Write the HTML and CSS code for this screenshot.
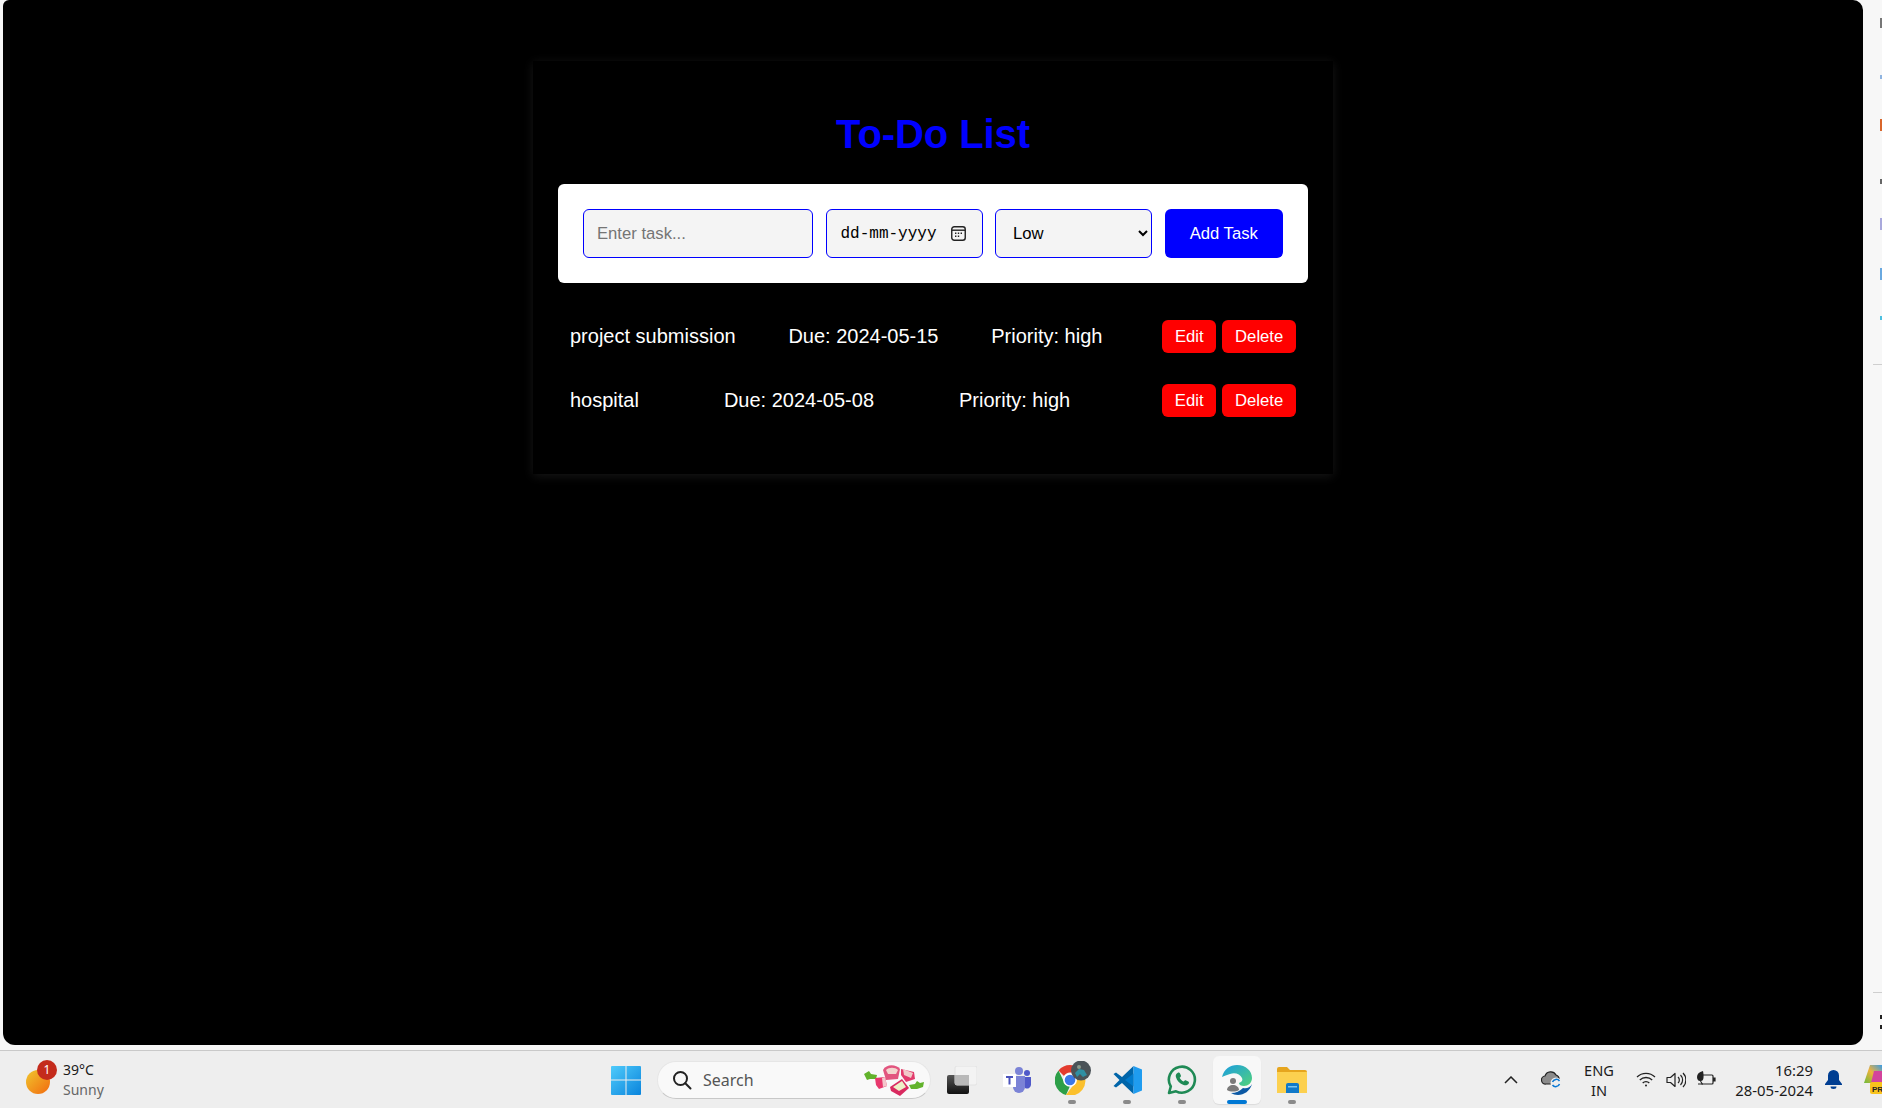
FILE: index.html
```html
<!DOCTYPE html>
<html lang="en">

<head>
  <meta charset="UTF-8" />
  <meta name="viewport" content="width=device-width, initial-scale=1.0" />
  <title>To-Do List</title>
  <link rel="stylesheet" href="styles.css">
</head>

<body>

  <div class="desktop">
    <!-- Browser page -->
    <main class="page">
      <div class="container">
        <h1>To-Do List</h1>
        <form class="task-form">
          <input class="field field-task" type="text" placeholder="Enter task...">
          <div class="field field-date">
            <span>dd-mm-yyyy</span>
            <svg width="15" height="15" viewBox="0 0 15 15" fill="none" stroke="#222">
              <rect x="0.75" y="0.75" width="13.5" height="13.5" rx="2.5" stroke-width="1.4" />
              <path d="M1 4.2h13" stroke-width="1.4" />
              <path d="M4 7.2h1.4M6.8 7.2h1.4M9.6 7.2h1.4M4 10.2h1.4M6.8 10.2h1.4" stroke-width="1.5" />
            </svg>
          </div>
          <select class="field field-priority">
            <option>Low</option>
            <option>Medium</option>
            <option>High</option>
          </select>
          <button class="add-btn" type="button">Add Task</button>
        </form>
        <ul class="task-list">
          <li class="task">
            <span>project submission</span>
            <span>Due: 2024-05-15</span>
            <span>Priority: high</span>
            <div class="task-actions">
              <button class="task-btn" type="button">Edit</button>
              <button class="task-btn" type="button">Delete</button>
            </div>
          </li>
          <li class="task">
            <span>hospital</span>
            <span>Due: 2024-05-08</span>
            <span>Priority: high</span>
            <div class="task-actions">
              <button class="task-btn" type="button">Edit</button>
              <button class="task-btn" type="button">Delete</button>
            </div>
          </li>
        </ul>
      </div>
    </main>

    <!-- Edge sidebar, cut off by the window -->
    <aside class="sidebar">
      <i class="side-dot dot-grey"></i>
      <i class="side-dot dot-blue"></i>
      <i class="side-dot dot-orange"></i>
      <i class="side-dot dot-small"></i>
      <i class="side-dot dot-purple"></i>
      <i class="side-dot dot-sky"></i>
      <i class="side-dot dot-cyan"></i>
      <hr class="side-line">
      <hr class="side-line side-line-low">
      <i class="side-dot dot-dark"></i>
      <i class="side-dot dot-dark dot-dark-2"></i>
    </aside>
  </div>

  <!-- Taskbar -->
  <footer class="taskbar">
    <div class="weather">
      <div class="sun"><span class="sun-badge">1</span></div>
      <div class="weather-text">
        <span>39°C</span>
        <span class="weather-sub">Sunny</span>
      </div>
    </div>

    <svg class="win-logo" width="30" height="30" viewBox="0 0 30 30">
      <defs>
        <linearGradient id="winA" x1="0" y1="0" x2="1" y2="1">
          <stop offset="0" stop-color="#4fcbfb" />
          <stop offset="1" stop-color="#0a84dc" />
        </linearGradient>
      </defs>
      <path fill="url(#winA)" d="M1 1h13.5v13.5H0V2a1 1 0 0 1 1-1zM15.500 1H29a1 1 0 0 1 1 1v12.500H15.500zM0 15.500h14.500V30H1a1 1 0 0 1-1-1zM15.500 15.500H30V29a1 1 0 0 1-1 1H15.500z" />
    </svg>

    <div class="search">
      <svg width="20" height="20" viewBox="0 0 20 20" fill="none" stroke="#222" stroke-width="2">
        <circle cx="8.500" cy="8.500" r="6.500" />
        <path d="M13.300 13.300L18.500 18.500" stroke-linecap="round" />
      </svg>
      <span class="search-label">Search</span>
      <svg class="search-art" width="62" height="32" viewBox="0 0 62 32">
        <path fill="#62b32c" d="M1 10l5-3 2 3 6 1-1 4-6 0-3 1zM46 21l6-1 2-3 3 2 4-1-1 5-6 2-6 0z" />
        <path fill="#e8386d" d="M12 14l10-1 2 9-8 3-3-4z" />
        <path fill="#f3c6cb" d="M19 14l3-1 2 9-4 1z" />
        <path fill="#e2557f" d="M20 6c3-6 13-6 17-1l-2 10-12 1z" />
        <path fill="#f3d5cf" d="M23 6c3-3 9-3 12 0l-2 4-8 0z" />
        <path fill="#d92a60" d="M27 23l12-8 7 9-9 8-9-5z" />
        <path fill="#eef0c8" d="M30 23l9-6 4 6-7 4z" />
        <path fill="#e23b6c" d="M38 5l13 3 1 7-9 3-5-7z" />
        <path fill="#f1c9c8" d="M40 5l10 4-2 5-7-3z" />
      </svg>
    </div>

    <div class="apps">
      <div class="app">
        <svg width="30" height="28" viewBox="0 0 30 28">
          <defs>
            <linearGradient id="tvA" x1="0" y1="0" x2="0" y2="1">
              <stop offset="0" stop-color="#555" />
              <stop offset="1" stop-color="#111" />
            </linearGradient>
          </defs>
          <rect x="0" y="9" width="22" height="19" rx="2" fill="url(#tvA)" />
          <rect x="8" y="0" width="22" height="19" rx="2" fill="#f3f3f3" stroke="#e2e2e2" />
          <rect x="8" y="9" width="14" height="10" fill="#b9b9b9" />
        </svg>
      </div>
      <div class="app">
        <svg width="28" height="26" viewBox="0 0 28 26">
          <circle cx="16" cy="4" r="4" fill="#7b83d6" />
          <circle cx="24" cy="6" r="3" fill="#5059c9" />
          <path fill="#7b83d6" d="M10 9h12v11a6 6 0 0 1-12 0z" />
          <path fill="#5059c9" d="M22 10h6v8a4 4 0 0 1-6 3z" />
          <rect x="0" y="7" width="13" height="13" fill="#fff" />
          <path d="M3 10h7M6.500 10v7.500" stroke="#4b53bc" stroke-width="2" fill="none" />
        </svg>
      </div>
      <div class="app">
        <svg class="chrome" width="36" height="34" viewBox="0 0 36 34">
          <path fill="#e33b2e" d="M15 4a15 15 0 0 1 13 7.500H15a6.800 6.800 0 0 0-6 3.500L3.500 9.500A15 15 0 0 1 15 4z" />
          <path fill="#2d9f48" d="M3.500 9.500L9.500 22a6.800 6.800 0 0 0 5.500 3l-4 9A15 15 0 0 1 3.500 9.500z" />
          <path fill="#fbc02d" d="M28 11.500a15 15 0 0 1-17 22.500l7-9.500a6.800 6.800 0 0 0 3-9 6 6 0 0 0-2-4z" />
          <circle cx="15" cy="19" r="6.800" fill="#fff" />
          <circle cx="15" cy="19" r="5.300" fill="#3b78e7" />
          <circle cx="26" cy="9.500" r="10" fill="#4b5358" />
          <path fill="#2f8fa3" d="M20 12l4-4 5 1 3 5-4 2-3-3-3 3z" />
          <circle cx="24" cy="6" r="2" fill="#8a9a8c" />
        </svg>
        <i class="app-dot"></i>
      </div>
      <div class="app">
        <svg width="30" height="30" viewBox="0 0 30 30">
          <path fill="#0065a9" d="M21.500 1L10 12 4 7.500 1.500 9l6 6-6 6L4 22.500 10 18l11.500 11z" />
          <path fill="#1f9cf0" d="M21.500 1L30 4.500v21L21.500 29z" />
          <path fill="#007acc" d="M21.500 8.500L13 15l8.500 6.500z" />
        </svg>
        <i class="app-dot"></i>
      </div>
      <div class="app">
        <svg width="30" height="30" viewBox="0 0 30 30" fill="none">
          <path stroke="#1f8a55" stroke-width="2.600" d="M2 28l1.800-6.500A13 13 0 1 1 9 26.300z" stroke-linejoin="round" />
          <path fill="#1f8a55" d="M10.500 8c1-.8 2-.6 2.400.3l1 2.200c.2.500 0 1-.4 1.400l-.8.800c.8 1.700 2.200 3 4 3.900l1-1c.4-.4.900-.4 1.400-.2l2.200 1.100c.8.400 1 1.400.3 2.300-1.100 1.400-3 1.900-5 1.100-3.700-1.300-6.700-4.300-7.700-8-.4-1.500 0-3 1.600-3.900z" />
        </svg>
        <i class="app-dot"></i>
      </div>
      <div class="app app-active">
        <svg width="32" height="32" viewBox="0 0 32 32">
          <defs>
            <linearGradient id="edgeA" x1="0" y1="0" x2="1" y2="1">
              <stop offset="0" stop-color="#1b9de2" />
              <stop offset="1" stop-color="#51d27a" />
            </linearGradient>
          </defs>
          <path fill="url(#edgeA)" d="M1 13C3 5 9 1 16 1c9 0 15 6 15 13 0 5-4 8-8 8-3 0-5-1-5-3 3-1 4-3 3-5-2-4-7-6-12-4-3 1-6 2-8 3z" />
          <path fill="#0c59a4" d="M31 20c-2 7-8 11-14 11-3 0-5-1-7-2 5 0 9-2 12-5 3 1 7 0 9-4z" />
          <circle cx="12" cy="17" r="3" fill="#7a7a7a" />
          <path fill="#7a7a7a" d="M6 26c0-3 3-5 6-5s6 2 6 5c-3 2-9 2-12 0z" />
        </svg>
        <i class="app-dot app-dot-active"></i>
      </div>
      <div class="app">
        <svg width="30" height="26" viewBox="0 0 30 26">
          <path fill="#e6a51e" d="M0 2a2 2 0 0 1 2-2h8l3 3h15a2 2 0 0 1 2 2v5H0z" />
          <path fill="#fcd04f" d="M0 5h30v21H0z" />
          <path fill="#1179c9" d="M9 18a2 2 0 0 1 2-2h9a2 2 0 0 1 2 2v8H9z" />
          <rect x="11" y="19" width="9" height="1.500" fill="#7cc4f0" />
        </svg>
        <i class="app-dot"></i>
      </div>
    </div>

    <div class="tray">
      <svg class="tray-chevron" width="14" height="8" viewBox="0 0 14 8" fill="none" stroke="#222" stroke-width="1.500">
        <path d="M1 7l6-6 6 6" />
      </svg>
      <svg class="tray-cloud" width="21" height="19" viewBox="0 0 21 19">
        <path fill="#8b8b8b" stroke="#222" stroke-width="1.200" d="M5 14a4 4 0 0 1-1-8 6 6 0 0 1 11-1 4.500 4.500 0 0 1 3 5l-6 4z" />
        <circle cx="15" cy="13" r="5.500" fill="#eee" />
        <path d="M11.500 12a4 4 0 0 1 7-1M18.500 14a4 4 0 0 1-7 1" fill="none" stroke="#0a78d4" stroke-width="1.500" />
      </svg>
      <div class="tray-lang">
        <span>ENG</span>
        <span>IN</span>
      </div>
      <svg class="tray-wifi" width="20" height="15" viewBox="0 0 20 15" fill="none" stroke="#222" stroke-width="1.300">
        <path d="M1 5a13 13 0 0 1 18 0M3.800 8a9 9 0 0 1 12.400 0M6.700 11a4.500 4.500 0 0 1 6.600 0" />
        <circle cx="10" cy="13.500" r="1" fill="#222" stroke="none" />
      </svg>
      <svg class="tray-volume" width="20" height="16" viewBox="0 0 20 16" fill="none" stroke="#222" stroke-width="1.200">
        <path d="M1 5.500h3.500L9 1.500v13l-4.500-4H1z" stroke-linejoin="round" />
        <path d="M12 5a4 4 0 0 1 0 6M14.500 3a7 7 0 0 1 0 10M17 1a10 10 0 0 1 0 14" />
      </svg>
      <svg class="tray-battery" width="20" height="17" viewBox="0 0 20 17" fill="none" stroke="#222" stroke-width="1.200">
        <path d="M6 4h10a1 1 0 0 1 1 1v7a1 1 0 0 1-1 1H2" />
        <path d="M17 7h2v3h-2" fill="#222" />
        <path fill="#222" stroke="none" d="M7 0c-4 1-6 3-6 6 0 2 1 4 3 4l2 4 1-1-2-3c3 0 3-5 2-10z" />
      </svg>
      <div class="tray-clock">
        <span>16:29</span>
        <span>28-05-2024</span>
      </div>
      <svg class="tray-bell" width="17" height="19" viewBox="0 0 17 19">
        <path fill="#003e92" d="M8.500 0A5.500 5.500 0 0 0 3 5.500V10l-3 4v1h17v-1l-3-4V5.500A5.500 5.500 0 0 0 8.500 0zM5.500 16.500a3 2.500 0 0 0 6 0z" />
      </svg>
      <svg class="tray-copilot" width="19" height="29" viewBox="0 0 19 29">
        <defs>
          <linearGradient id="copA" x1="0" y1="1" x2="1" y2="0">
            <stop offset="0" stop-color="#6dbb3b" />
            <stop offset="0.500" stop-color="#f0b23a" />
            <stop offset="1" stop-color="#2f9bf0" />
          </linearGradient>
        </defs>
        <path fill="url(#copA)" d="M6 0h13v18H0z" />
        <path fill="#d3439c" d="M10 6h9v12H7z" />
        <rect x="6" y="17" width="13" height="12" rx="2" fill="#f8c31c" />
        <text x="8" y="27" class="copilot-pre">PR</text>
      </svg>
    </div>
  </footer>

</body>

</html>
```

FILE: styles.css
```css
* {
  margin: 0;
  padding: 0;
  box-sizing: border-box;
}

html,
body {
  height: 100vh;
  width: 100vw;
  overflow: hidden;
  font-family: "Liberation Sans", Arial, sans-serif;
  background-color: #f7f7f7;
}

.desktop {
  display: flex;
  height: 1050px;
  padding: 0 0 5px 3px;
}

/* page */
.page {
  flex: 1;
  background-color: #000;
  border-radius: 6px 10px 12px 12px;
}

.container {
  width: 800px;
  height: 413px;
  margin: 61px auto 0;
  padding: 0 25px;
  background-color: #000;
  box-shadow: 0 2px 10px rgba(255, 255, 255, 0.09);
}

h1 {
  padding-top: 50px;
  margin-bottom: 27px;
  text-align: center;
  font-size: 40px;
  line-height: 46px;
  font-weight: bold;
  letter-spacing: -0.1px;
  color: #0000ff;
}

.task-form {
  display: flex;
  gap: 12.5px;
  height: 99px;
  padding: 25px;
  background-color: #fff;
  border-radius: 6px;
}

.field {
  height: 49px;
  background-color: #f4f4f4;
  border: 1.25px solid #0000ff;
  border-radius: 6px;
  font-family: "Liberation Sans", Arial, sans-serif;
  font-size: 16.67px;
  color: #000;
  outline: none;
}

.field-task {
  width: 230px;
  padding: 0 13px;
}

.field-date {
  display: flex;
  align-items: center;
  justify-content: space-between;
  width: 157px;
  padding: 0 16px 0 14px;
  font-family: "Liberation Mono", monospace;
  font-size: 16px;
}

.field-priority {
  width: 157px;
  padding: 0 0 0 13px;
}

.add-btn {
  width: 118.5px;
  height: 49px;
  background-color: #0000ff;
  color: #fff;
  border: none;
  border-radius: 6px;
  font-family: inherit;
  font-size: 16.67px;
}

.task-list {
  list-style: none;
  padding: 37px 12px 0;
}

.task {
  display: flex;
  justify-content: space-between;
  align-items: center;
  height: 33px;
  margin-bottom: 31px;
  font-size: 20px;
  color: #fff;
}

.task-actions {
  display: flex;
  gap: 6px;
  margin-left: 7px;
}

.task-btn {
  height: 33px;
  padding: 0 12.75px;
  background-color: #ff0000;
  color: #fff;
  border: none;
  border-radius: 6px;
  font-family: inherit;
  font-size: 16.67px;
}

/* sidebar */
.sidebar {
  display: flex;
  flex-direction: column;
  flex: 0 0 19px;
  overflow: hidden;
}

.side-dot {
  display: block;
  flex: none;
  width: 3px;
  margin-left: 17px;
}

.dot-grey {
  height: 10px;
  margin-top: 18px;
  background-color: #777;
}

.dot-blue {
  height: 4px;
  margin-top: 47px;
  background-color: #8fb4e0;
}

.dot-orange {
  height: 12px;
  margin-top: 40px;
  background-color: #d9662b;
}

.dot-small {
  height: 5px;
  margin-top: 48px;
  background-color: #666;
}

.dot-purple {
  height: 12px;
  margin-top: 34px;
  background-color: #a9a9dc;
}

.dot-sky {
  height: 12px;
  margin-top: 38px;
  background-color: #6aa9e0;
}

.dot-cyan {
  height: 4px;
  margin-top: 36px;
  background-color: #4cc0e0;
}

.side-line {
  flex: none;
  height: 1px;
  margin: 44px 0 0 10px;
  border: none;
  background-color: #cfcfcf;
}

.side-line-low {
  margin-top: 627px;
}

.dot-dark {
  height: 4px;
  margin-top: 22px;
  background-color: #222;
}

.dot-dark-2 {
  margin-top: 6px;
}

/* taskbar */
.taskbar {
  display: flex;
  align-items: center;
  height: 58px;
  background-color: #eee;
  border-top: 1px solid #c9c9c9;
  color: #1b1b1b;
  font-family: "Noto Sans", "Open Sans", sans-serif;
  font-size: 14px;
}

.weather {
  display: flex;
  align-items: center;
  flex: none;
  width: 611px;
  padding-left: 26px;
}

.sun {
  position: relative;
  width: 24px;
  height: 24px;
  margin-top: 4px;
  border-radius: 50%;
  background: linear-gradient(135deg, #f0c62e, #f26a0e);
}

.sun-badge {
  position: absolute;
  top: -10px;
  left: 11px;
  width: 20px;
  height: 20px;
  border-radius: 50%;
  background-color: #c42b1c;
  color: #fff;
  font-size: 12px;
  line-height: 20px;
  text-align: center;
}

.weather-text {
  display: flex;
  flex-direction: column;
  margin-left: 13px;
  line-height: 20px;
}

.weather-sub {
  color: #666;
}

.win-logo {
  flex: none;
}

.search {
  display: flex;
  align-items: center;
  flex: none;
  width: 274px;
  height: 38px;
  margin-left: 16px;
  padding-left: 14px;
  background-color: #f9f9f9;
  border: 1px solid #e6e6e6;
  border-bottom-color: #c8c8c8;
  border-radius: 19px;
}

.search-label {
  margin-left: 11px;
  font-size: 16px;
  color: #555;
}

.search-art {
  margin-left: auto;
  margin-right: 5px;
}

.apps {
  display: flex;
  flex: none;
  gap: 7px;
  margin-left: 7px;
}

.app {
  position: relative;
  display: flex;
  align-items: center;
  justify-content: center;
  width: 48px;
  height: 48px;
  border-radius: 6px;
}

.app-active {
  background-color: #f8f8f8;
  box-shadow: 0 1px 1px rgba(0, 0, 0, 0.08);
}

.app-dot {
  position: absolute;
  left: 20px;
  bottom: 0;
  width: 8px;
  height: 4px;
  border-radius: 2px;
  background-color: #8a8a8a;
}

.app-dot-active {
  left: 14px;
  width: 20px;
  background-color: #0078d4;
}

.chrome {
  margin: -3px 0 0 2px;
}

.tray {
  display: flex;
  align-items: center;
  flex: none;
  margin-left: 188px;
}

.tray-cloud {
  margin-left: 23px;
}

.tray-lang {
  display: flex;
  flex-direction: column;
  align-items: center;
  width: 40px;
  margin-left: 17px;
  font-size: 14.6px;
  line-height: 20px;
}

.tray-wifi {
  margin-left: 17px;
}

.tray-volume {
  margin-left: 10px;
}

.tray-battery {
  margin-left: 10px;
}

.tray-clock {
  display: flex;
  flex-direction: column;
  align-items: flex-end;
  width: 80px;
  margin-left: 17px;
  font-size: 14.9px;
  line-height: 20px;
}

.tray-bell {
  margin-left: 12px;
}

.tray-copilot {
  margin-left: 22px;
}

.copilot-pre {
  font-family: "Liberation Sans", sans-serif;
  font-size: 8px;
  font-weight: bold;
  fill: #222;
}
```
